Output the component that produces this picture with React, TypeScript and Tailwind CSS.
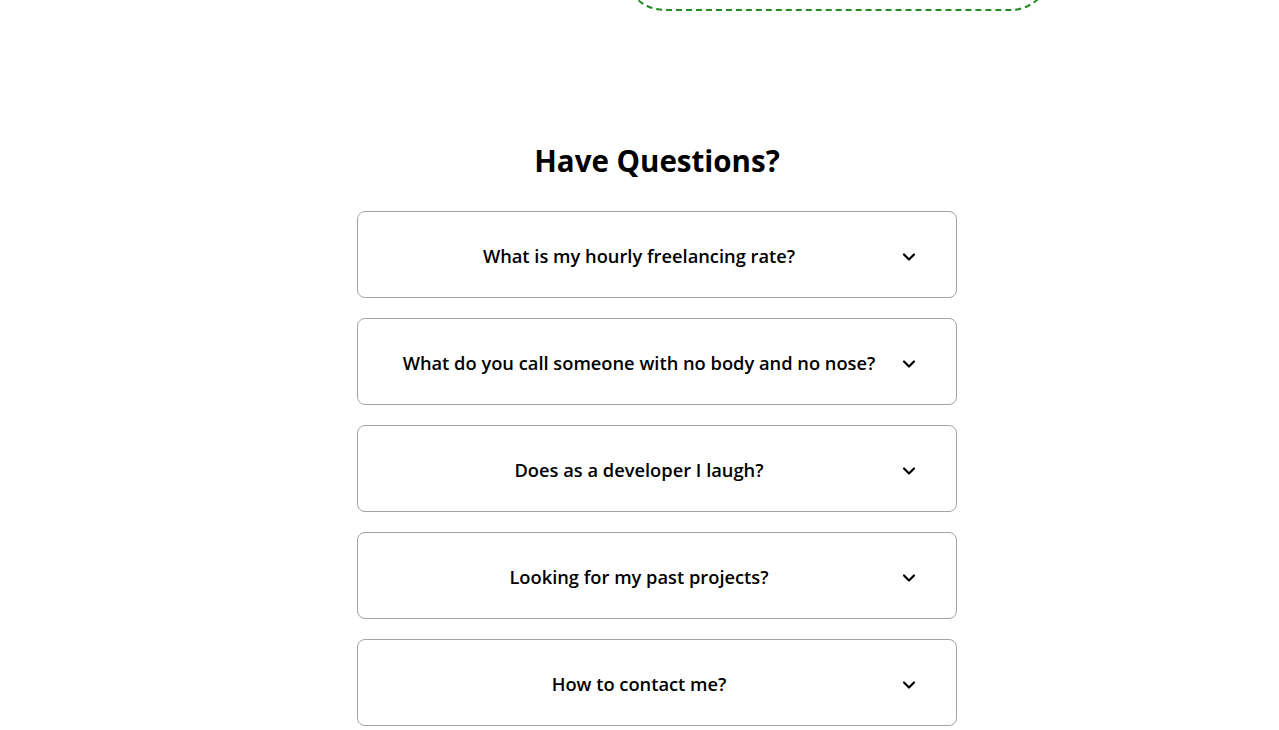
import { ChevronDown } from "lucide-react";

const questions = [
  "What is my hourly freelancing rate?",
  "What do you call someone with no body and no nose?",
  "Does as a developer I laugh?",
  "Looking for my past projects?",
  "How to contact me?",
];

const FaqItem = ({ q }: { q: string }) => {
  return (
    <button className="flex h-[87px] w-full items-center rounded-lg border border-[#a3a3a3] bg-white pl-10 pr-[37px] pt-[2px] text-black">
      <span className="flex-1 text-center text-[18.3px] font-semibold">{q}</span>
      <span className="ml-[19px] flex w-5 justify-center pt-[2px]">
        <ChevronDown size={22} strokeWidth={2.6} />
      </span>
    </button>
  );
};

export default function App() {
  return (
    <div
      className="min-h-screen overflow-hidden bg-white text-black"
      style={{ fontFamily: '"Open Sans", "Noto Sans", sans-serif' }}
    >
      {/* tail of the previous section */}
      <div className="ml-[624px] -mt-[69px] h-[80px] w-[427px] rounded-[41px] border-2 border-dashed border-[#228b22]" />

      <section className="ml-[357px] mt-[130px] flex w-[600px] flex-col items-center">
        <h2 className="text-[29.5px] font-bold leading-10">Have Questions?</h2>

        <div className="mt-[30px] flex w-full flex-col gap-5">
          {questions.map((q) => (
            <FaqItem key={q} q={q} />
          ))}
        </div>
      </section>
    </div>
  );
}
